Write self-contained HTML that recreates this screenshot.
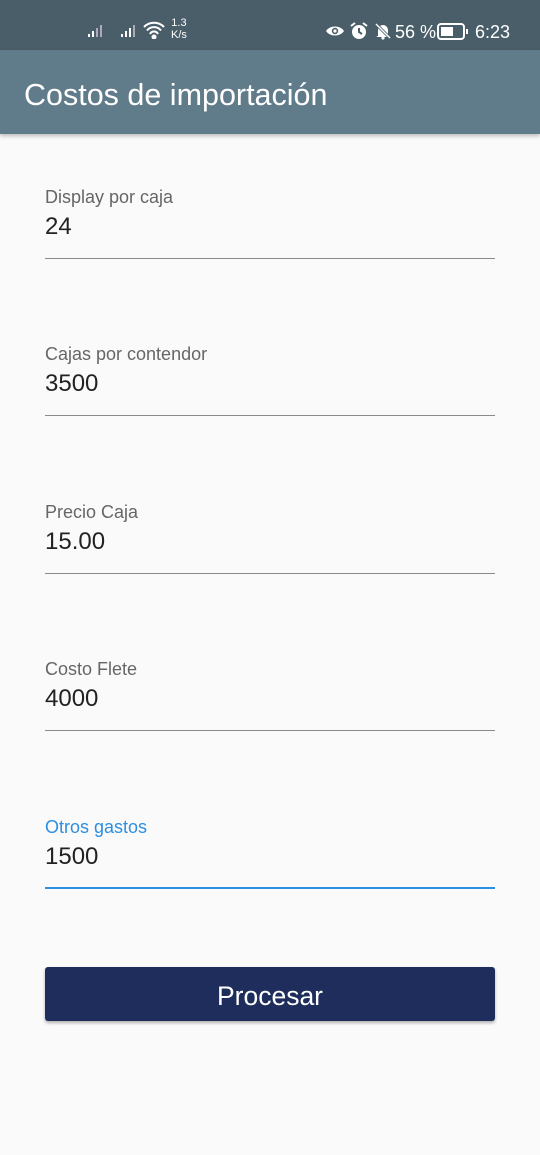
<!DOCTYPE html>
<html><head><meta charset="utf-8"><style>
body{margin:0;width:540px;height:1155px;background:#fafafa;font-family:"Liberation Sans",sans-serif;position:relative;overflow:hidden}
.sb{position:absolute;top:0;left:0;width:540px;height:50px;background:#4a5e6a;color:#fff}
.ab{position:absolute;top:50px;left:0;width:540px;height:84px;background:#607b8a;box-shadow:0 2px 4px rgba(0,0,0,.25)}
.ab span{position:absolute;left:24px;top:28px;font-size:30.5px;color:#fff}
.f{position:absolute;left:45px;width:450px}
.f .l{position:absolute;top:-1px;font-size:18px;color:#666}
.f .v{position:absolute;top:25px;font-size:24px;color:#222}
.f .u{position:absolute;top:70px;width:450px;height:1px;background:#8a8a8a}
.btn{position:absolute;left:45px;top:967px;width:450px;height:54px;background:#1e2d5b;border-radius:3px;box-shadow:0 2px 3px rgba(0,0,0,.3);color:#fff;font-size:26.5px;text-align:center;line-height:58px}
</style></head><body>
<div class="sb">
<svg style="position:absolute;left:88px;top:24px" width="18" height="14"><rect x="0" y="10" width="2" height="3" fill="#fff"/><rect x="4" y="7" width="2" height="6" fill="#fff"/><rect x="8" y="4" width="2" height="9" fill="#aab"/><rect x="12" y="1" width="2" height="12" fill="#aab"/></svg>
<svg style="position:absolute;left:121px;top:24px" width="18" height="14"><rect x="0" y="10" width="2" height="3" fill="#fff"/><rect x="4" y="7" width="2" height="6" fill="#fff"/><rect x="8" y="4" width="2" height="9" fill="#fff"/><rect x="12" y="1" width="2" height="12" fill="#aab"/></svg>
<svg style="position:absolute;left:143px;top:21px" width="22" height="18" fill="none" stroke="#fff" stroke-width="2"><path d="M1 6a14 14 0 0 1 20 0M4 9.5a9 9 0 0 1 14 0M7 13a4.5 4.5 0 0 1 8 0"/><circle cx="11" cy="16" r="1.5" fill="#fff"/></svg>
<div style="position:absolute;left:171px;top:17px;font-size:11px;line-height:12px;text-align:center">1.3<br>K/s</div>
<svg style="position:absolute;left:325px;top:24px" width="20" height="14"><path d="M1 7C5 1 15 1 19 7C15 13 5 13 1 7Z" fill="#fff"/><circle cx="10" cy="7" r="3.2" fill="#4a5e6a"/><circle cx="10" cy="7" r="1.6" fill="#fff"/></svg>
<svg style="position:absolute;left:350px;top:22px" width="18" height="18"><circle cx="9" cy="10" r="7" fill="#fff"/><path d="M9 6v4l3 2" stroke="#4a5e6a" stroke-width="2" fill="none"/><path d="M1 4l4-3M17 4l-4-3" stroke="#fff" stroke-width="2"/></svg>
<svg style="position:absolute;left:374px;top:22px" width="18" height="18"><path d="M4 14V8a5 5 0 0 1 10 0v6l2 1H2z" fill="#fff"/><circle cx="9" cy="16" r="1.6" fill="#fff"/><path d="M2 2l14 14" stroke="#4a5e6a" stroke-width="3"/><path d="M2 2l14 14" stroke="#fff" stroke-width="1.5"/></svg>
<div style="position:absolute;left:395px;top:22px;font-size:18px">56 %</div>
<svg style="position:absolute;left:437px;top:23px" width="32" height="17"><rect x="1" y="1" width="26" height="15" rx="3" fill="none" stroke="#fff" stroke-width="2"/><rect x="4" y="4" width="12" height="9" fill="#fff"/><rect x="29" y="6" width="2" height="5" fill="#fff"/></svg>
<div style="position:absolute;left:475px;top:22px;font-size:18px">6:23</div>
</div>
<div class="ab"><span>Costos de importación</span></div>
<div class="f" style="top:188px"><div class="l">Display por caja</div><div class="v">24</div><div class="u"></div></div>
<div class="f" style="top:345px"><div class="l">Cajas por contendor</div><div class="v">3500</div><div class="u"></div></div>
<div class="f" style="top:503px"><div class="l">Precio Caja</div><div class="v">15.00</div><div class="u"></div></div>
<div class="f" style="top:660px"><div class="l">Costo Flete</div><div class="v">4000</div><div class="u"></div></div>
<div class="f" style="top:818px"><div class="l" style="color:#2e8ee0">Otros gastos</div><div class="v">1500</div><div class="u" style="height:2px;top:69px;background:#2e8ee0"></div></div>
<div class="btn">Procesar</div>
</body></html>
